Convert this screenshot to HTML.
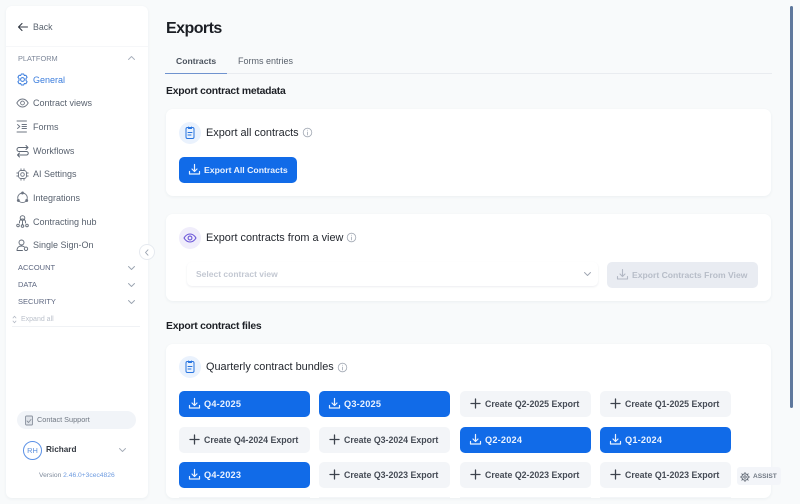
<!DOCTYPE html>
<html><head><meta charset="utf-8"><style>
*{box-sizing:border-box}
html,body{margin:0;padding:0;width:800px;height:504px;overflow:hidden;background:#f8fafb;font-family:"Liberation Sans",sans-serif;color:#1c2026}
.a{position:absolute;white-space:nowrap}
svg{position:absolute;fill:none;stroke-linecap:round;stroke-linejoin:round}
.side{left:6px;top:6px;width:142px;height:492px;background:#fff;border-radius:6px;box-shadow:0 1px 3px rgba(40,60,90,.06)}
.nav{left:33px;font-size:9px;color:#59626f;line-height:12px}
.sec{left:18px;font-size:7.5px;color:#5d6780;line-height:10px}
.card{background:#fff;border-radius:7px;box-shadow:0 1px 3px rgba(40,60,90,.06)}
.h{font-weight:bold;font-size:10.4px;letter-spacing:-.24px;color:#1d2026;line-height:14px;left:166px}
.ct{font-size:10.9px;color:#23272e;line-height:14px;left:206px}
.circ{width:22px;height:22px;border-radius:50%;background:#eaf2fd;left:179px}
.b{width:131px;height:26px;border-radius:5px;font-size:8.8px;font-weight:bold;line-height:26px}
.p{background:#116be8;color:#eaf2ff}
.p span{position:absolute;left:25px;font-size:9.2px;letter-spacing:.2px}
.g{background:#f3f5f8;color:#464c56}
.g span{position:absolute;left:25px}
.b svg{left:8.5px;top:6px}
</style></head><body>

<div class="a side"></div>
<div class="a" style="left:6px;top:46px;width:142px;height:1px;background:#f6f7f9"></div>

<svg style="left:17px;top:21px" width="12" height="12" viewBox="0 0 12 12" stroke="#333a45" stroke-width="1.1"><path d="M10.5 6H1.5M5 2.5 1.5 6 5 9.5"/></svg>
<div class="a" style="left:33px;top:21px;font-size:8.8px;color:#5b6470;line-height:12px">Back</div>

<div class="a sec" style="top:53.5px;color:#7d8799;font-size:7.4px">PLATFORM</div>
<svg style="left:127px;top:55px" width="9" height="6" viewBox="0 0 9 6" stroke="#a9b0bc" stroke-width=".9"><path d="M1.5 4.5 4.500 1.500 7.500 4.500"/></svg>

<svg style="left:16px;top:73px" width="13" height="13" viewBox="0 0 13 13" stroke="#3b7ddd" stroke-width="1"><path d="M5.300 1H7.700L8.300 2.500 9.900 2.200 11.100 4.300 10 5.500V7.500L11.100 8.700 9.900 10.800 8.300 10.500 7.700 12H5.300L4.700 10.500 3.100 10.800 1.900 8.700 3 7.500V5.500L1.900 4.300 3.100 2.200 4.700 2.500Z"/><circle cx="6.500" cy="6.500" r="1.900"/></svg>
<div class="a nav" style="top:73.5px;color:#3b7ddd">General</div>

<svg style="left:16px;top:98px" width="13" height="10" viewBox="0 0 13 10" stroke="#6d7582" stroke-width=".9"><path d="M.8 5C2.500 2 4.500 1 6.500 1s4 1 5.700 4c-1.700 3-3.700 4-5.700 4S2.500 8 .8 5Z"/><circle cx="6.500" cy="5" r="1.900"/></svg>
<div class="a nav" style="top:97px">Contract views</div>

<svg style="left:16px;top:120px" width="12" height="13" viewBox="0 0 12 13" stroke="#6d7582" stroke-width=".9"><path d="M1 1H10.500M1 12H10.500M1.500 4.500 3.800 6.500 1.500 8.500M6 4.500H10.500M6 6.500H10.500M6 8.500H10.500"/></svg>
<div class="a nav" style="top:120.5px">Forms</div>

<svg style="left:16px;top:144px" width="13" height="14" viewBox="0 0 13 14" stroke="#5f6875" stroke-width="1"><path d="M12 3.500H3a2 2 0 0 0 0 4h7.500a1.700 1.700 0 0 1 0 3.500H1.500M10 1.500 12 3.500 10 5.500M3.500 9 1.500 11 3.500 13"/></svg>
<div class="a nav" style="top:144.5px">Workflows</div>

<svg style="left:16px;top:168px" width="13" height="13" viewBox="0 0 13 13" stroke="#6d7582" stroke-width=".9"><rect x="2.500" y="2.500" width="8" height="8" rx="2.500"/><circle cx="6.500" cy="6.500" r="1.800"/><path d="M5 .8V2.500M8 .8V2.500M5 10.500V12.200M8 10.500V12.200M.8 5H2.500M.8 8H2.500M10.500 5H12.200M10.500 8H12.200"/></svg>
<div class="a nav" style="top:168px">AI Settings</div>

<svg style="left:16px;top:191px" width="13" height="13" viewBox="0 0 13 13" stroke="#6d7582" stroke-width=".9"><circle cx="6.500" cy="6.800" r="4.800"/><circle cx="6.500" cy="2" r="1" fill="#6d7582"/><circle cx="2.300" cy="9.500" r="1" fill="#6d7582"/><circle cx="10.700" cy="9.500" r="1" fill="#6d7582"/></svg>
<div class="a nav" style="top:192px">Integrations</div>

<svg style="left:16px;top:215px" width="13" height="13" viewBox="0 0 13 13" stroke="#5f6875" stroke-width=".9"><circle cx="6.500" cy="3" r="2.300"/><path d="M3.500 8V7a3 3 0 0 1 6 0v1M6.500 6V10"/><circle cx="2" cy="10.500" r="1.300"/><circle cx="6.500" cy="11" r="1.300"/><circle cx="11" cy="10.500" r="1.300"/></svg>
<div class="a nav" style="top:215.5px">Contracting hub</div>

<svg style="left:16px;top:239px" width="13" height="13" viewBox="0 0 13 13" stroke="#5f6875" stroke-width=".9"><circle cx="5.500" cy="3.500" r="2.500"/><path d="M1 11.500C1 8.500 3 7 5.500 7c1 0 2 .3 2.700.8M1 11.500H6.500"/><circle cx="10" cy="9.800" r="1.700"/></svg>
<div class="a nav" style="top:239px">Single Sign-On</div>

<div class="a" style="left:139px;top:244px;width:16px;height:16px;border-radius:50%;background:#fff;border:1px solid #e6eaf0"></div>
<svg style="left:144px;top:249px" width="6" height="7" viewBox="0 0 6 7" stroke="#9aa3b0" stroke-width=".9"><path d="M4 .8 1.500 3.500 4 6.200"/></svg>

<div class="a sec" style="top:262.5px">ACCOUNT</div>
<div class="a sec" style="top:280px">DATA</div>
<div class="a sec" style="top:296.5px">SECURITY</div>
<svg style="left:127px;top:265px" width="9" height="6" viewBox="0 0 9 6" stroke="#9aa3b0" stroke-width=".9"><path d="M1.500 1.500 4.500 4.500 7.500 1.500"/></svg>
<svg style="left:127px;top:282px" width="9" height="6" viewBox="0 0 9 6" stroke="#9aa3b0" stroke-width=".9"><path d="M1.500 1.500 4.500 4.500 7.500 1.500"/></svg>
<svg style="left:127px;top:299px" width="9" height="6" viewBox="0 0 9 6" stroke="#9aa3b0" stroke-width=".9"><path d="M1.500 1.500 4.500 4.500 7.500 1.500"/></svg>
<svg style="left:12px;top:315px" width="5" height="9" viewBox="0 0 5 9" stroke="#b5bbc6" stroke-width=".8"><path d="M1 3 2.500 1.200 4 3M1 6 2.500 7.800 4 6"/></svg>
<div class="a" style="left:21px;top:315px;font-size:7px;color:#bcc2cc;line-height:10px">Expand all</div>
<div class="a" style="left:12px;top:326px;width:128px;height:1px;background:#f0f2f5"></div>

<div class="a" style="left:17px;top:411px;width:119px;height:18px;border-radius:9px;background:#f1f4f8"></div>
<svg style="left:24px;top:415px" width="10" height="11" viewBox="0 0 10 11" stroke="#8a929e" stroke-width=".9"><rect x="1.500" y="1" width="7" height="9" rx="1" fill="#dfe3e9"/><path d="M3 6 4.500 7.500 7 4.500"/></svg>
<div class="a" style="left:37px;top:415px;font-size:7.3px;color:#6f7782;line-height:10px">Contact Support</div>
<div class="a" style="left:23px;top:440.5px;width:19px;height:19px;border-radius:50%;border:1px solid #5b91e6;background:#fff;font-size:7.4px;color:#5b8fdd;line-height:17px;text-align:center">RH</div>
<div class="a" style="left:46px;top:444px;font-size:8.2px;font-weight:bold;color:#333840;line-height:12px">Richard</div>
<svg style="left:118px;top:447px" width="9" height="6" viewBox="0 0 9 6" stroke="#a5acb7" stroke-width=".9"><path d="M1.500 1.500 4.500 4.500 7.500 1.500"/></svg>
<div class="a" style="left:39px;top:471px;font-size:6.7px;line-height:10px;color:#7f8b9c">Version <span style="color:#6d9be0">2.46.0+3cec4826</span></div>

<div class="a" style="left:166px;top:19px;font-size:16px;letter-spacing:-.55px;font-weight:bold;color:#1b1e24;line-height:20px">Exports</div>
<div class="a" style="left:176px;top:54.5px;font-size:8.6px;font-weight:bold;color:#4a525d;line-height:12px">Contracts</div>
<div class="a" style="left:238px;top:54.5px;font-size:9px;color:#5a626d;line-height:12px">Forms entries</div>
<div class="a" style="left:166px;top:73px;width:606px;height:1px;background:#e9ecf0"></div>
<div class="a" style="left:165px;top:73px;width:62px;height:1px;background:#6f93cf"></div>
<div class="a h" style="top:85px">Export contract metadata</div>

<div class="a card" style="left:166px;top:109px;width:605px;height:87px"></div>
<div class="a circ" style="top:122px"></div>
<svg style="left:184px;top:126px" width="12" height="14" viewBox="0 0 12 14" stroke="#2774e0" stroke-width="1"><rect x="2" y="1.500" width="8" height="11" rx="1.500"/><path d="M4.500 1V2.500H7.500V1M4 6.500H8M4 9H7"/></svg>
<div class="a ct" style="top:126px">Export all contracts</div>
<svg style="left:302px;top:127px" width="11" height="11" viewBox="0 0 11 11" stroke="#a1a8b3" stroke-width=".8"><circle cx="5.500" cy="5.500" r="4.300"/><path d="M5.500 5V8M5.500 3.200V3.400"/></svg>

<div class="a p" style="left:179px;top:157px;width:118px;height:26px;border-radius:5px;font-size:8.7px;font-weight:bold;line-height:26px"><span style="left:25px;font-size:8.7px;letter-spacing:0;position:absolute">Export All Contracts</span>
<svg style="left:8.500px;top:6px" width="13" height="13" viewBox="0 0 13 13" stroke="#eaf2ff" stroke-width="1.200"><path d="M6.500 1.500V8.500M4 6 6.500 8.500 9 6M1.500 8.500V11H11.500V8.500"/></svg></div>

<div class="a card" style="left:166px;top:214px;width:605px;height:87px"></div>
<div class="a circ" style="top:227px;background:#f0edfb"></div>
<svg style="left:183px;top:233px" width="14" height="10" viewBox="0 0 14 10" stroke="#6a55d8" stroke-width="1.100"><path d="M1 5C2.800 2 4.800 1 7 1s4.200 1 6 4c-1.800 3-3.800 4-6 4S2.800 8 1 5Z"/><circle cx="7" cy="5" r="1.900"/></svg>
<div class="a ct" style="top:231px">Export contracts from a view</div>
<svg style="left:346px;top:232px" width="11" height="11" viewBox="0 0 11 11" stroke="#a1a8b3" stroke-width=".8"><circle cx="5.500" cy="5.500" r="4.300"/><path d="M5.500 5V8M5.500 3.200V3.400"/></svg>

<div class="a" style="left:187px;top:262px;width:411px;height:24px;background:#fff;border-radius:5px;box-shadow:0 1px 2px rgba(40,60,90,.09)"></div>
<div class="a" style="left:196px;top:268px;font-size:8.5px;color:#c3c8d2;line-height:12px;font-weight:bold">Select contract view</div>
<svg style="left:583px;top:271px" width="9" height="6" viewBox="0 0 9 6" stroke="#9ea5b1" stroke-width=".9"><path d="M1.500 1.500 4.500 4.500 7.500 1.500"/></svg>
<div class="a" style="left:607px;top:262px;width:151px;height:26px;border-radius:5px;background:#e9ecf2"></div>
<svg style="left:616px;top:268px" width="13" height="13" viewBox="0 0 13 13" stroke="#b2b8c4" stroke-width="1.100"><path d="M6.500 1.500V8.500M4 6 6.500 8.500 9 6M1.500 8.500V11H11.500V8.500"/></svg>
<div class="a" style="left:632px;top:269px;font-size:8.6px;font-weight:bold;color:#b7bdc8;line-height:12px">Export Contracts From View</div>

<div class="a h" style="top:319.500px">Export contract files</div>

<div class="a card" style="left:166px;top:344px;width:605px;height:154px"></div>
<div class="a circ" style="top:356px"></div>
<svg style="left:184px;top:360px" width="12" height="14" viewBox="0 0 12 14" stroke="#2774e0" stroke-width="1"><rect x="2" y="1.500" width="8" height="11" rx="1.500"/><path d="M4.500 1V2.500H7.500V1M4 6.500H8M4 9H7"/></svg>
<div class="a ct" style="top:360px">Quarterly contract bundles</div>
<svg style="left:337px;top:362px" width="11" height="11" viewBox="0 0 11 11" stroke="#a1a8b3" stroke-width=".8"><circle cx="5.500" cy="5.500" r="4.300"/><path d="M5.500 5V8M5.500 3.200V3.400"/></svg>

<div class="a b p" style="left:179px;top:391px"><svg width="13" height="13" viewBox="0 0 13 13" stroke="#eaf2ff" stroke-width="1.200"><path d="M6.500 1.500V8.500M4 6 6.500 8.500 9 6M1.500 8.500V11H11.500V8.500"/></svg><span>Q4-2025</span></div>
<div class="a b p" style="left:319px;top:391px"><svg width="13" height="13" viewBox="0 0 13 13" stroke="#eaf2ff" stroke-width="1.200"><path d="M6.500 1.500V8.500M4 6 6.500 8.500 9 6M1.500 8.500V11H11.500V8.500"/></svg><span>Q3-2025</span></div>
<div class="a b g" style="left:460px;top:391px"><svg width="13" height="13" viewBox="0 0 13 13" stroke="#3d434d" stroke-width="1.300"><path d="M6.500 2V11M2 6.500H11"/></svg><span>Create Q2-2025 Export</span></div>
<div class="a b g" style="left:600px;top:391px"><svg width="13" height="13" viewBox="0 0 13 13" stroke="#3d434d" stroke-width="1.300"><path d="M6.500 2V11M2 6.500H11"/></svg><span>Create Q1-2025 Export</span></div>

<div class="a b g" style="left:179px;top:427px"><svg width="13" height="13" viewBox="0 0 13 13" stroke="#3d434d" stroke-width="1.300"><path d="M6.500 2V11M2 6.500H11"/></svg><span>Create Q4-2024 Export</span></div>
<div class="a b g" style="left:319px;top:427px"><svg width="13" height="13" viewBox="0 0 13 13" stroke="#3d434d" stroke-width="1.300"><path d="M6.500 2V11M2 6.500H11"/></svg><span>Create Q3-2024 Export</span></div>
<div class="a b p" style="left:460px;top:427px"><svg width="13" height="13" viewBox="0 0 13 13" stroke="#eaf2ff" stroke-width="1.200"><path d="M6.500 1.500V8.500M4 6 6.500 8.500 9 6M1.500 8.500V11H11.500V8.500"/></svg><span>Q2-2024</span></div>
<div class="a b p" style="left:600px;top:427px"><svg width="13" height="13" viewBox="0 0 13 13" stroke="#eaf2ff" stroke-width="1.200"><path d="M6.500 1.500V8.500M4 6 6.500 8.500 9 6M1.500 8.500V11H11.500V8.500"/></svg><span>Q1-2024</span></div>

<div class="a b p" style="left:179px;top:462px"><svg width="13" height="13" viewBox="0 0 13 13" stroke="#eaf2ff" stroke-width="1.200"><path d="M6.500 1.500V8.500M4 6 6.500 8.500 9 6M1.500 8.500V11H11.500V8.500"/></svg><span>Q4-2023</span></div>
<div class="a b g" style="left:319px;top:462px"><svg width="13" height="13" viewBox="0 0 13 13" stroke="#3d434d" stroke-width="1.300"><path d="M6.500 2V11M2 6.500H11"/></svg><span>Create Q3-2023 Export</span></div>
<div class="a b g" style="left:460px;top:462px"><svg width="13" height="13" viewBox="0 0 13 13" stroke="#3d434d" stroke-width="1.300"><path d="M6.500 2V11M2 6.500H11"/></svg><span>Create Q2-2023 Export</span></div>
<div class="a b g" style="left:600px;top:462px"><svg width="13" height="13" viewBox="0 0 13 13" stroke="#3d434d" stroke-width="1.300"><path d="M6.500 2V11M2 6.500H11"/></svg><span>Create Q1-2023 Export</span></div>

<div class="a" style="left:179px;top:497px;width:131px;height:1px;background:#f3f5f8"></div>
<div class="a" style="left:319px;top:497px;width:131px;height:1px;background:#f3f5f8"></div>
<div class="a" style="left:460px;top:497px;width:131px;height:1px;background:#f3f5f8"></div>
<div class="a" style="left:600px;top:497px;width:131px;height:1px;background:#f3f5f8"></div>

<div class="a" style="left:737px;top:467px;width:44px;height:18px;border-radius:3px;background:#f3f5f9"></div>
<svg style="left:740px;top:472px" width="10" height="10" viewBox="0 0 10 10" stroke="#5e6672" stroke-width=".9"><circle cx="5" cy="5" r="3.200"/><circle cx="5" cy="5" r="1.200"/><path d="M5 .5V1.800M5 8.200V9.500M.5 5H1.800M8.200 5H9.500M1.800 1.800 2.700 2.700M7.300 7.300 8.200 8.200M1.800 8.200 2.700 7.300M7.300 2.700 8.200 1.800"/></svg>
<div class="a" style="left:753px;top:472px;font-size:6.600px;font-weight:bold;color:#717984;line-height:10px">ASSIST</div>

<div class="a" style="left:790px;top:6px;width:3px;height:402px;background:#5d779c;border-radius:1.500px"></div>
</body></html>
